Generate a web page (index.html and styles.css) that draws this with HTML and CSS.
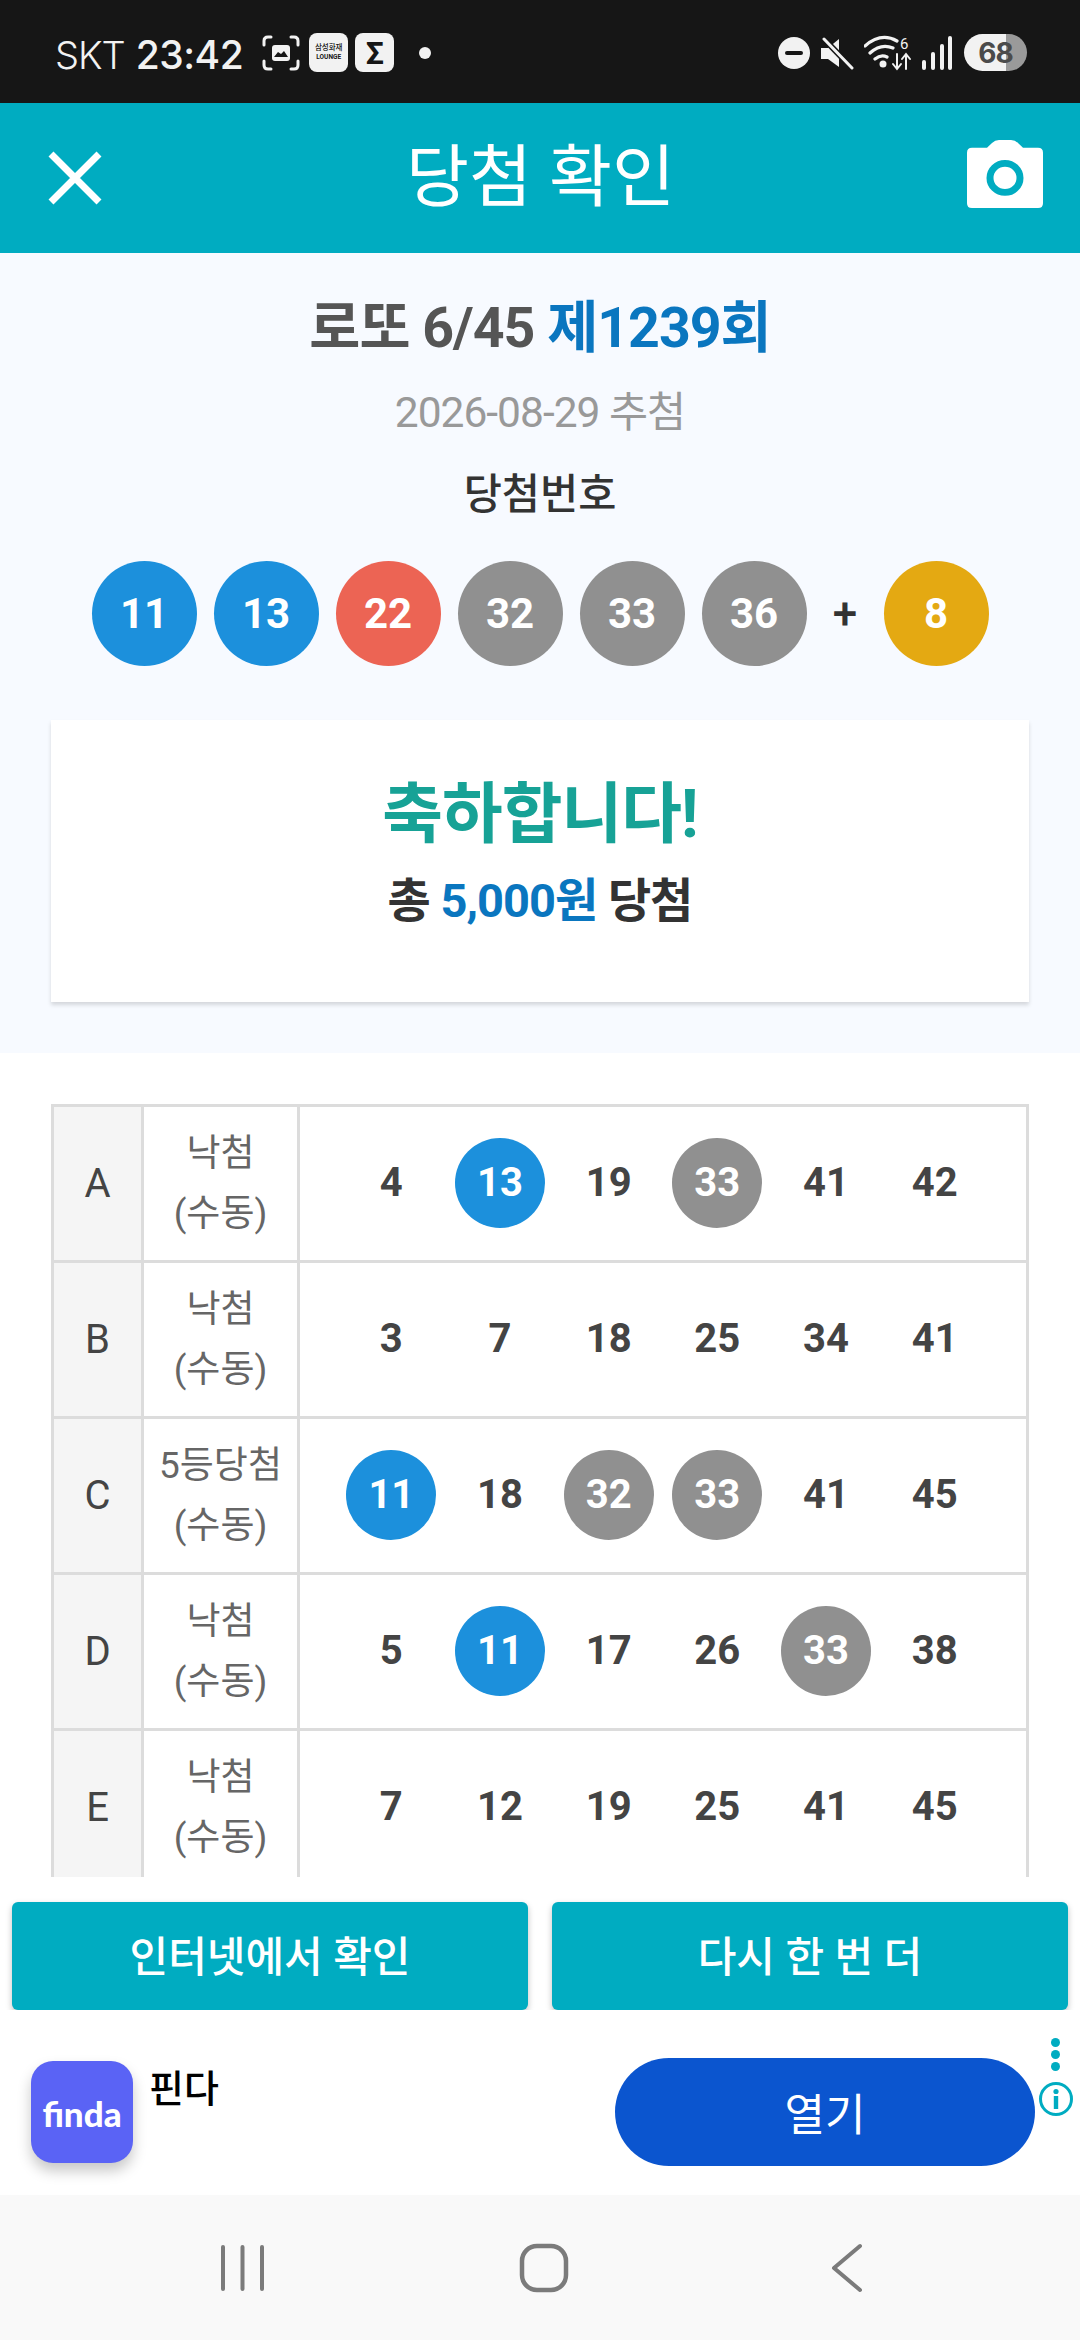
FILE: index.html
```html
<!DOCTYPE html>
<html lang="ko">
<head>
<meta charset="utf-8">
<title>당첨 확인</title>
<link rel="stylesheet" href="styles.css">
</head>
<body>
<div class="screen">
  <div class="status">
    <span class="carrier">SKT</span>
    <span class="clock">23:42</span>
    <svg class="ic-capture" width="38" height="36" viewBox="0 0 38 36" fill="none" stroke="#f2f2f2" stroke-width="3" stroke-linecap="round"><path d="M9 2H6Q2 2 2 6v4M29 2h3q4 0 4 4v4M9 34H6q-4 0-4-4v-4M29 34h3q4 0 4-4v-4"/><rect x="10" y="10" width="18" height="16" rx="3" fill="#f2f2f2" stroke="none"/><path d="M12 22l4-5 3 2 3-3 4 6z" fill="#161616" stroke="none"/></svg>
    <span class="tile tile-lounge"><span class="tile-ko">삼성화재</span><span class="tile-en">LOUNGE</span></span>
    <span class="tile tile-sigma">Σ</span>
    <span class="dot"></span>
    <span class="status-right">
      <svg width="32" height="32" viewBox="0 0 32 32"><circle cx="16" cy="16" r="16" fill="#f2f2f2"/><rect x="7" y="14" width="18" height="4" rx="2" fill="#161616"/></svg>
      <svg class="ic-mute" width="34" height="34" viewBox="0 0 34 34"><path d="M1 12h7l11-9v28L8 23H1z" fill="#f2f2f2"/><path d="M3 2l29 30" stroke="#161616" stroke-width="6"/><path d="M4 3l28 29" stroke="#f2f2f2" stroke-width="3" stroke-linecap="round"/></svg>
      <svg class="ic-wifi" width="48" height="36" viewBox="0 0 48 36" fill="none" stroke="#f2f2f2" stroke-width="3.2" stroke-linecap="round"><path d="M1 11Q17-3 33 6M6 18Q17 8 29 13M11 24q6-5 12-2"/><circle cx="19" cy="29" r="3.5" fill="#f2f2f2" stroke="none"/><path d="M33 19v14M29 29l4 5 4-5M42 34V20M38 24l4-5 4 5" stroke-width="2"/><text x="36" y="14" class="wifi-six">6</text></svg>
      <svg class="ic-signal" width="30" height="34" viewBox="0 0 30 34" fill="#f2f2f2"><rect x="0" y="24" width="4" height="10" rx="2"/><rect x="9" y="16" width="4" height="18" rx="2"/><rect x="18" y="8" width="4" height="26" rx="2"/><rect x="26" y="0" width="4" height="34" rx="2"/></svg>
      <span class="battery"><span class="battery-num">68</span></span>
    </span>
  </div>

  <header class="topbar">
    <svg class="ic-close" width="54" height="54" viewBox="0 0 54 54" stroke="#fff" stroke-width="7"><path d="M3 3l48 48M51 3L3 51"/></svg>
    <h1 class="page-title">당첨 확인</h1>
    <svg class="ic-camera" width="76" height="68" viewBox="0 0 76 70" preserveAspectRatio="none"><path d="M5 8h15l5-5q3-3 7-3h12q4 0 7 3l5 5h15q5 0 5 5v52q0 5-5 5H5q-5 0-5-5V13q0-5 5-5z" fill="#fff"/><circle cx="38" cy="39" r="15" fill="none" stroke="#00acc1" stroke-width="7"/></svg>
  </header>

  <section class="hero">
    <div class="round"><span>로또 6/45</span> <span class="blue">제1239회</span></div>
    <div class="date">2026-08-29 추첨</div>
    <div class="label">당첨번호</div>
    <div class="balls">
      <span class="ball b-blue">11</span>
      <span class="ball b-blue">13</span>
      <span class="ball b-red">22</span>
      <span class="ball b-gray">32</span>
      <span class="ball b-gray">33</span>
      <span class="ball b-gray">36</span>
      <span class="plus">+</span>
      <span class="ball b-gold">8</span>
    </div>
    <div class="card">
      <div class="congrats">축하합니다!</div>
      <div class="total">총 <span class="blue">5,000원</span> 당첨</div>
    </div>
  </section>

  <main class="ticket-area">
    <div class="ticket">
      <div class="row">
        <div class="cell letter">A</div>
        <div class="cell result">낙첨<br>(수동)</div>
        <div class="cell nums"><span class="n">4</span><span class="n hit b-blue">13</span><span class="n">19</span><span class="n hit b-gray">33</span><span class="n">41</span><span class="n">42</span></div>
      </div>
      <div class="row">
        <div class="cell letter">B</div>
        <div class="cell result">낙첨<br>(수동)</div>
        <div class="cell nums"><span class="n">3</span><span class="n">7</span><span class="n">18</span><span class="n">25</span><span class="n">34</span><span class="n">41</span></div>
      </div>
      <div class="row">
        <div class="cell letter">C</div>
        <div class="cell result">5등당첨<br>(수동)</div>
        <div class="cell nums"><span class="n hit b-blue">11</span><span class="n">18</span><span class="n hit b-gray">32</span><span class="n hit b-gray">33</span><span class="n">41</span><span class="n">45</span></div>
      </div>
      <div class="row">
        <div class="cell letter">D</div>
        <div class="cell result">낙첨<br>(수동)</div>
        <div class="cell nums"><span class="n">5</span><span class="n hit b-blue">11</span><span class="n">17</span><span class="n">26</span><span class="n hit b-gray">33</span><span class="n">38</span></div>
      </div>
      <div class="row">
        <div class="cell letter">E</div>
        <div class="cell result">낙첨<br>(수동)</div>
        <div class="cell nums"><span class="n">7</span><span class="n">12</span><span class="n">19</span><span class="n">25</span><span class="n">41</span><span class="n">45</span></div>
      </div>
    </div>
  </main>

  <div class="actions">
    <button class="action">인터넷에서 확인</button>
    <button class="action">다시 한 번 더</button>
  </div>

  <aside class="ad">
    <div class="ad-logo">finda</div>
    <div class="ad-name">핀다</div>
    <button class="ad-open">열기</button>
    <div class="ad-side">
      <span class="ad-dots"><i></i><i></i><i></i></span>
      <svg width="36" height="36" viewBox="0 0 36 36"><circle cx="18" cy="18" r="15.5" fill="none" stroke="#00acc1" stroke-width="3"/><circle cx="18" cy="10.5" r="2.6" fill="#00acc1"/><rect x="15.8" y="15" width="4.4" height="13" fill="#00acc1"/></svg>
    </div>
  </aside>

  <nav class="navbar">
    <svg width="45" height="46" viewBox="0 0 45 46" stroke="#7b7b7b" stroke-width="4" stroke-linecap="round"><path d="M3 2v42M22.500 2v42M42 2v42"/></svg>
    <svg width="50" height="50" viewBox="0 0 50 50" fill="none" stroke="#7b7b7b" stroke-width="4.5"><rect x="3" y="3" width="44" height="44" rx="15"/></svg>
    <svg width="32" height="50" viewBox="0 0 32 50" fill="none" stroke="#7b7b7b" stroke-width="4" stroke-linecap="round" stroke-linejoin="round"><path d="M29 3L3 25l26 22"/></svg>
  </nav>
</div>
</body>
</html>
```
FILE: styles.css
```css
* { box-sizing: border-box; }
html, body { margin: 0; padding: 0; }
body { font-family: Roboto, "Noto Sans CJK KR", sans-serif; background: #fff; }
.screen { width: 1080px; height: 2340px; display: flex; flex-direction: column; overflow: hidden; }

.status { height: 103px; flex: none; background: #161616; color: #f2f2f2; display: flex; align-items: center; padding: 6px 53px 0 55px; }
.carrier { font-family: Inter, sans-serif; font-size: 38px; font-weight: 300; letter-spacing: -1px; }
.clock { font-family: Inter, sans-serif; font-size: 39px; font-weight: 500; margin-left: 11px; letter-spacing: -.5px; }
.ic-capture { margin-left: 19px; margin-top: -4px; }
.tile { width: 39px; height: 39px; border-radius: 8px; background: #f2f2f2; color: #161616; display: flex; flex-direction: column; align-items: center; justify-content: center; margin-top: -4px; }
.tile-lounge { margin-left: 9px; gap: 2px; }
.tile-ko { font-size: 7.500px; line-height: 8px; white-space: nowrap; font-weight: 500; }
.tile-en { font-size: 6.500px; line-height: 7px; font-weight: 700; }
.tile-sigma { margin-left: 7px; font-size: 32px; font-weight: 700; line-height: 1; }
.dot { width: 12px; height: 12px; border-radius: 50%; background: #f2f2f2; margin-left: 25px; margin-top: -4px; }
.status-right { margin-left: auto; display: flex; align-items: center; margin-top: -4px; }
.ic-mute { margin-left: 10px; }
.ic-wifi { margin-left: 10px; }
.wifi-six { font-family: Roboto, sans-serif; font-size: 15px; fill: #f2f2f2; stroke: none; }
.ic-signal { margin-left: 10px; }
.battery { width: 63px; height: 37px; border-radius: 19px; margin-left: 12px; background: linear-gradient(90deg, #f2f2f2 0 42px, #9a9a9a 42px); color: #4b4b4b; display: flex; align-items: center; justify-content: center; }
.battery-num { font-size: 28px; font-weight: 700; font-family: Inter, sans-serif; letter-spacing: -1px; }

.topbar { height: 150px; flex: none; background: #00acc1; display: flex; align-items: center; justify-content: space-between; padding: 0 37px 0 48px; }
.page-title { margin: 0 0 0 12px; font-size: 68.500px; font-weight: 400; color: #fff; line-height: 1; }
.ic-camera { margin-top: -8px; }

.hero { flex: none; height: 800px; background: #f7faff; padding: 41px 51px 0; display: flex; flex-direction: column; align-items: center; }
.round { font-size: 55.500px; font-weight: 700; line-height: 70px; color: #555; letter-spacing: -1px; }
.blue { color: #0a76bf; }
.date { font-size: 42.500px; line-height: 60px; color: #999; margin-top: 19px; letter-spacing: -1px; }
.label { font-size: 41.500px; font-weight: 500; line-height: 60px; color: #333; margin-top: 22px; }
.balls { display: flex; align-items: center; margin-top: 36px; gap: 17px; }
.ball { width: 105px; height: 105px; border-radius: 50%; color: #fff; font-size: 42px; font-weight: 700; display: flex; align-items: center; justify-content: center; }
.b-blue { background: #1c90dc; }
.b-red { background: #ec6454; }
.b-gray { background: #909090; }
.b-gold { background: #e4a912; }
.plus { font-size: 44px; font-weight: 500; color: #333; width: 43px; text-align: center; }
.card { width: 978px; height: 282px; margin-top: 54px; background: #fff; box-shadow: 0 3px 4px rgba(0,0,0,.14); display: flex; flex-direction: column; align-items: center; padding-top: 50px; }
.congrats { font-size: 66px; font-weight: 700; line-height: 90px; color: #17a296; letter-spacing: -1px; }
.total { font-size: 47px; font-weight: 700; line-height: 60px; color: #333; margin-top: 11px; letter-spacing: -1px; }

.ticket-area { height: 824px; flex: none; padding: 51px 51px 0; overflow: hidden; background: #fff; }
.ticket { background: #dcdcdc; display: flex; flex-direction: column; gap: 3px; padding: 3px; }
.row { display: grid; grid-template-columns: 87px 153px 1fr; gap: 3px; height: 153px; }
.cell { background: #fff; display: flex; align-items: center; justify-content: center; }
.letter { background: #f5f5f5; font-size: 40px; color: #444; }
.result { font-size: 37px; line-height: 60px; color: #666; text-align: center; }
.nums { display: grid; grid-template-columns: repeat(6, 1fr); justify-items: center; padding: 0 37px 2px; }
.n { width: 90px; height: 90px; border-radius: 50%; display: flex; align-items: center; justify-content: center; font-size: 40px; font-weight: 700; color: #444; }
.hit { color: #fff; }
.hit.b-blue { background: #1c90dc; }

.actions { flex: none; height: 133px; padding: 25px 12px 0; display: flex; gap: 24px; background: #fff; }
.action { flex: 1; height: 108px; border: 0; border-radius: 6px; padding: 0 0 5px; background: #00acc1; color: #fff; font: 500 42px Roboto, "Noto Sans CJK KR", sans-serif; box-shadow: 0 3px 6px rgba(0,0,0,.25); }

.ad { flex: none; height: 185px; background: #fff; display: flex; padding-left: 31px; }
.ad-logo { width: 102px; height: 102px; margin-top: 51px; border-radius: 22px; background: #5a63f5; color: #fff; font-family: Lato, sans-serif; font-size: 35px; font-weight: 900; display: flex; align-items: center; justify-content: center; box-shadow: 0 8px 14px rgba(0,0,0,.22); padding-top: 2px; }
.ad-name { font-size: 38px; font-weight: 500; color: #000; margin: 49px 0 0 16px; line-height: 60px; }
.ad-open { width: 420px; height: 108px; margin: 48px 0 0 auto; border: 0; border-radius: 54px; background: #0b55cf; color: #fff; font: 400 44px Roboto, "Noto Sans CJK KR", sans-serif; }
.ad-side { width: 45px; padding: 28px 4px 0 0; display: flex; flex-direction: column; align-items: center; }
.ad-dots { display: flex; flex-direction: column; gap: 3px; margin-bottom: 10px; }
.ad-dots i { width: 9px; height: 9px; border-radius: 50%; background: #00acc1; display: block; }

.navbar { flex: 1; background: #f9f9f9; display: flex; align-items: center; padding: 0 0 0 220px; }
.navbar svg:nth-child(2) { margin-left: 254px; }
.navbar svg:nth-child(3) { margin-left: 262px; }
```
